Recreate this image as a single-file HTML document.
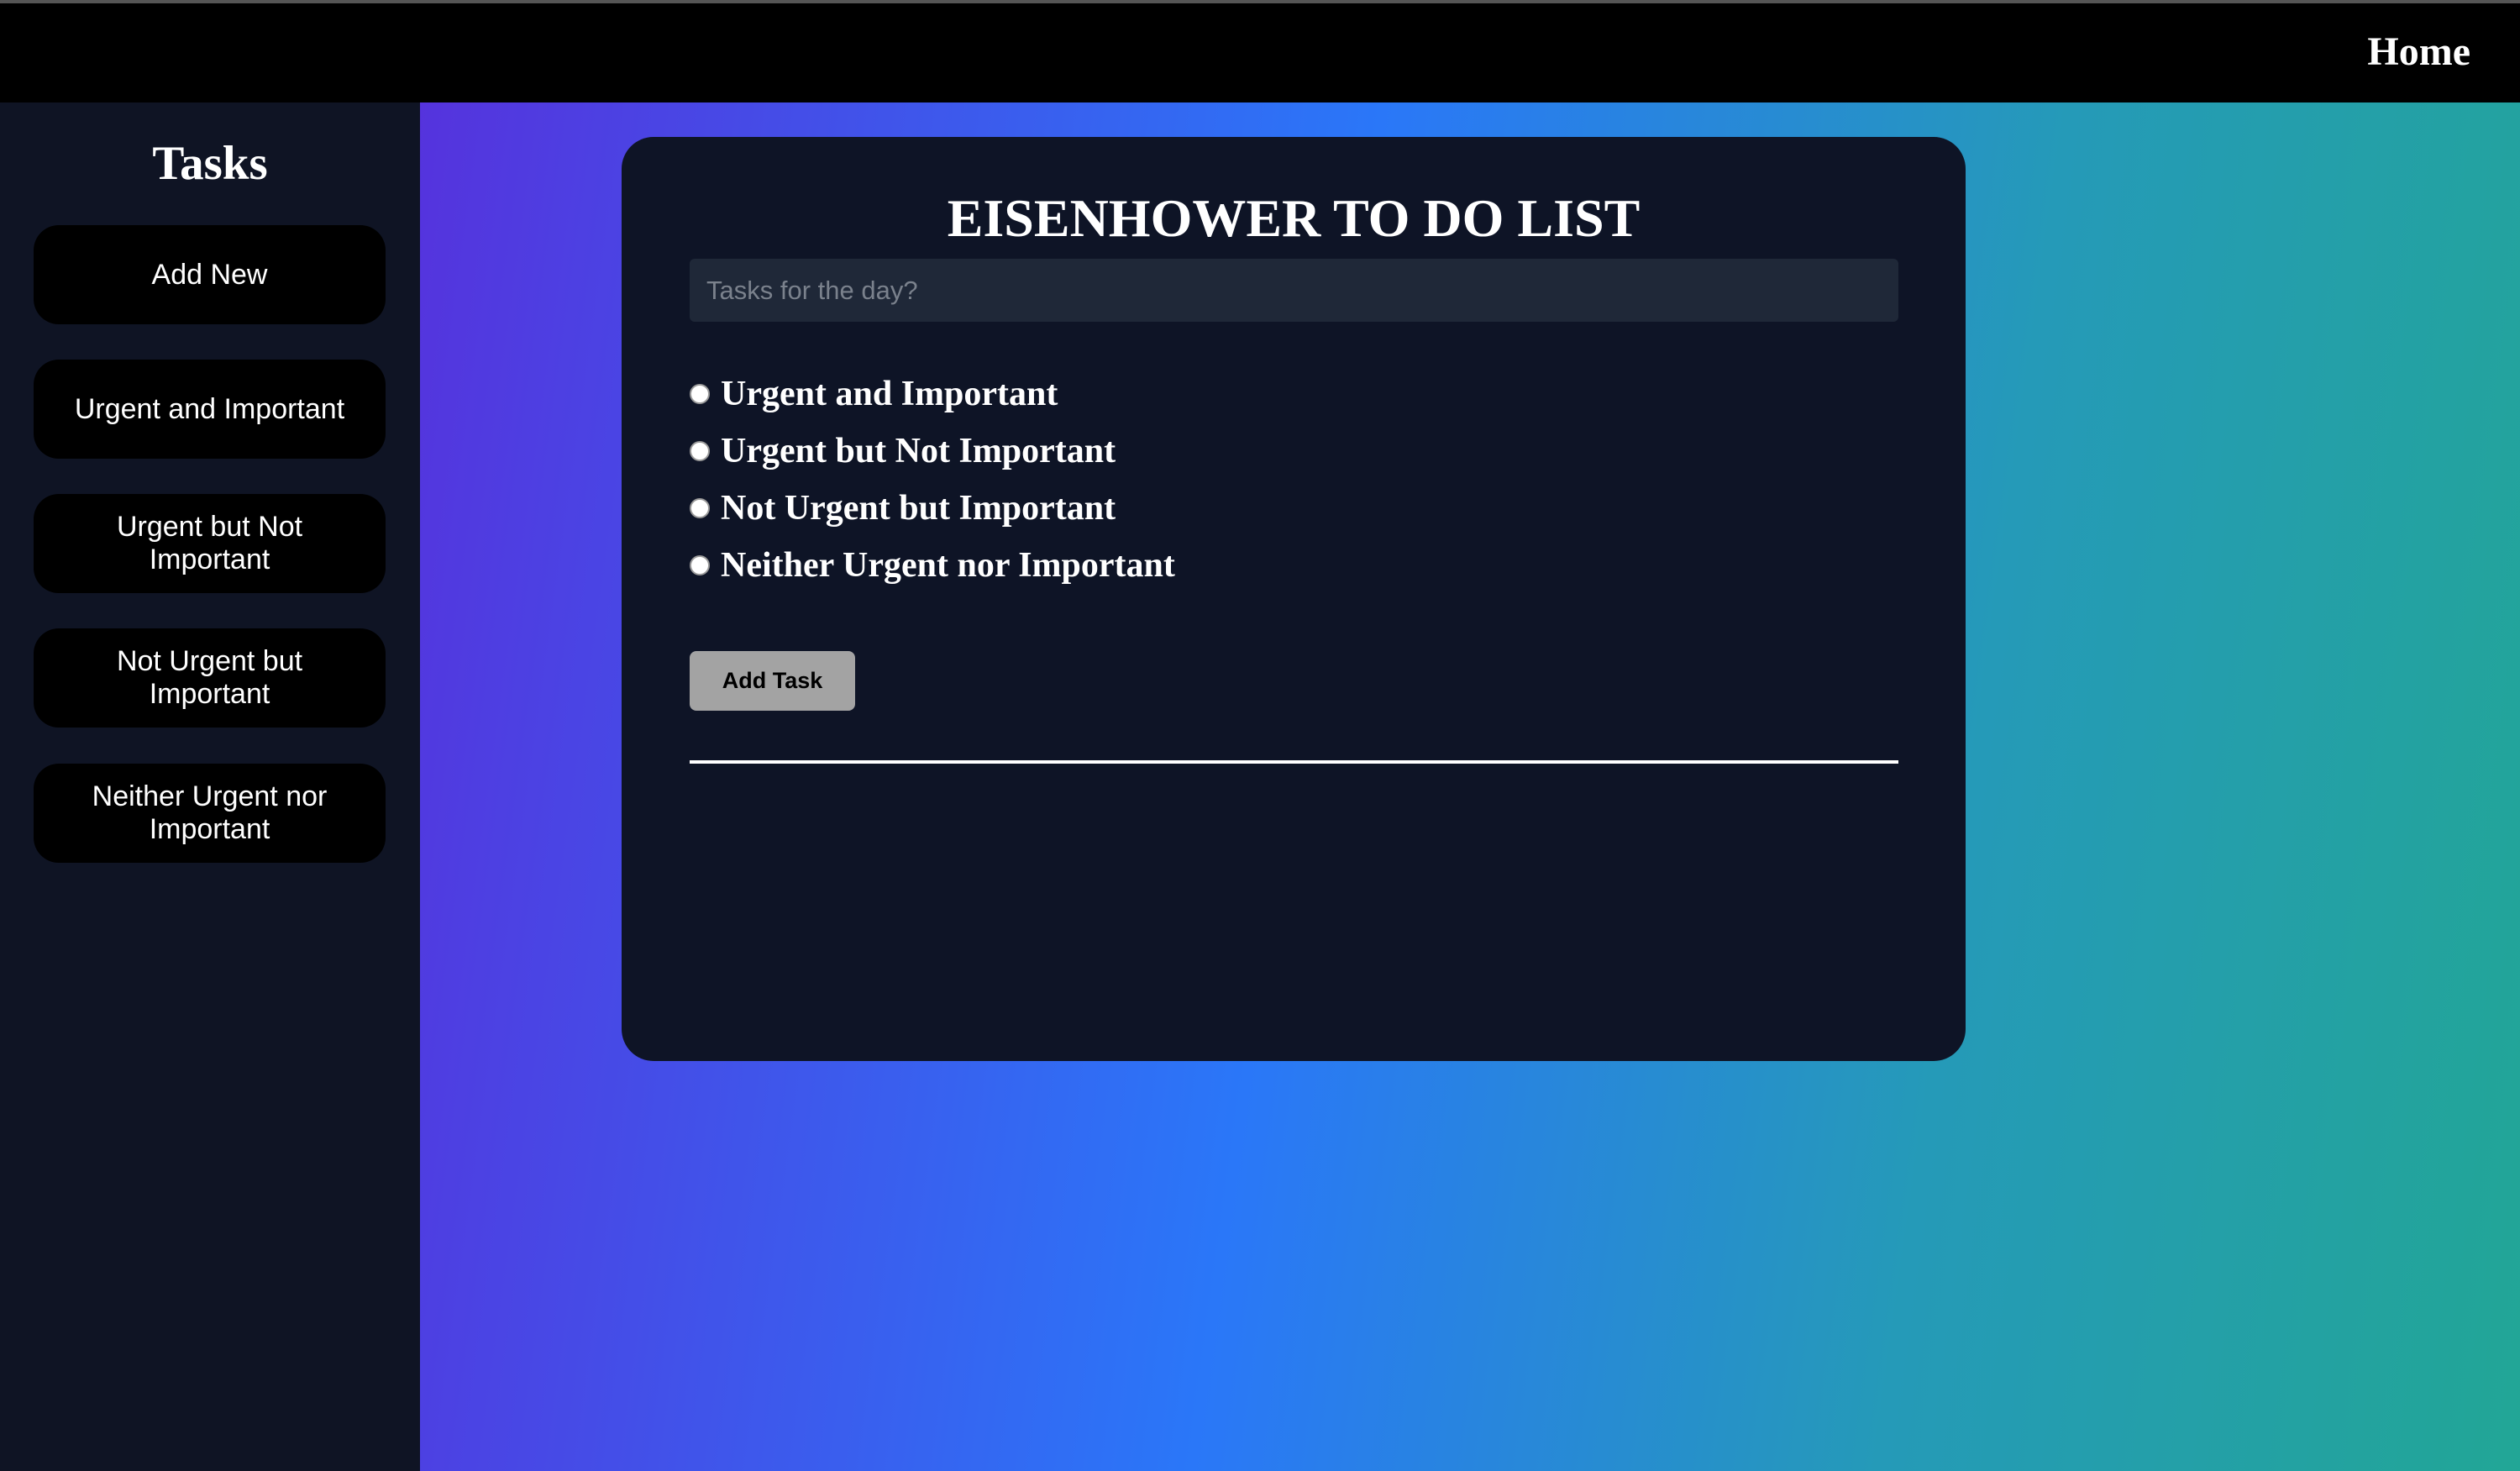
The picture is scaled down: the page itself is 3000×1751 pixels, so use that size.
<!DOCTYPE html>
<html><head><style>
*{margin:0;padding:0;box-sizing:border-box}
html,body{width:3000px;height:1751px;overflow:hidden}
body{position:relative;background:#000;font-family:"Liberation Sans",sans-serif}
.topline{position:absolute;left:0;top:0;width:3000px;height:4px;background:#555}
.header{position:absolute;left:0;top:4px;width:3000px;height:118px;background:#000}
.home{position:absolute;right:59px;top:30px;color:#fff;font:bold 48px "Liberation Serif",serif}
.side{position:absolute;left:0;top:122px;width:500px;height:1629px;background:#0f1424}
.side h2{position:absolute;left:0;width:500px;top:40px;text-align:center;color:#fff;font:bold 57px "Liberation Serif",serif}
.btn{position:absolute;left:40px;width:419px;height:118px;background:#000;border-radius:30px;color:#fff;font-size:34px;line-height:39px;display:flex;align-items:center;justify-content:center;text-align:center}
.main{position:absolute;left:500px;top:122px;width:2500px;height:1629px;background:linear-gradient(98deg,#5533dd 0%,#2a77f8 42%,#259ab8 72%,#22a696 100%)}
.card{position:absolute;left:240px;top:41px;width:1600px;height:1100px;background:#0e1426;border-radius:38px}
.title{position:absolute;left:0;width:1600px;top:60px;text-align:center;color:#fff;font:bold 64px "Liberation Serif",serif}
.input{position:absolute;left:81px;top:145px;width:1439px;height:75px;background:#1f2838;border-radius:6px;color:#7a818c;font-size:31px;line-height:75px;padding-left:20px}
.opt{position:absolute;left:81px;color:#fff;font:bold 42px "Liberation Serif",serif;line-height:50px}
.opt i{display:inline-block;width:24px;height:24px;border-radius:50%;background:#fff;border:2px solid #999;margin-right:13px;vertical-align:1px}
.add{position:absolute;left:81px;top:612px;width:197px;height:71px;background:#a3a3a3;border-radius:8px;color:#000;font-weight:bold;font-size:27px;line-height:71px;text-align:center}
.hr{position:absolute;left:81px;top:742px;width:1439px;height:4px;background:#fff}
</style></head><body>
<div class="topline"></div>
<div class="header"><div class="home">Home</div></div>
<div class="side">
<h2>Tasks</h2>
<div class="btn" style="top:146px">Add New</div>
<div class="btn" style="top:306px">Urgent and Important</div>
<div class="btn" style="top:466px">Urgent but Not<br>Important</div>
<div class="btn" style="top:626px">Not Urgent but<br>Important</div>
<div class="btn" style="top:787px">Neither Urgent nor<br>Important</div>
</div>
<div class="main">
<div class="card">
<div class="title">EISENHOWER TO DO LIST</div>
<div class="input">Tasks for the day?</div>
<div class="opt" style="top:281px"><i></i>Urgent and Important</div>
<div class="opt" style="top:349px"><i></i>Urgent but Not Important</div>
<div class="opt" style="top:417px"><i></i>Not Urgent but Important</div>
<div class="opt" style="top:485px"><i></i>Neither Urgent nor Important</div>
<div class="add">Add Task</div>
<div class="hr"></div>
</div>
</div>
</body></html>
